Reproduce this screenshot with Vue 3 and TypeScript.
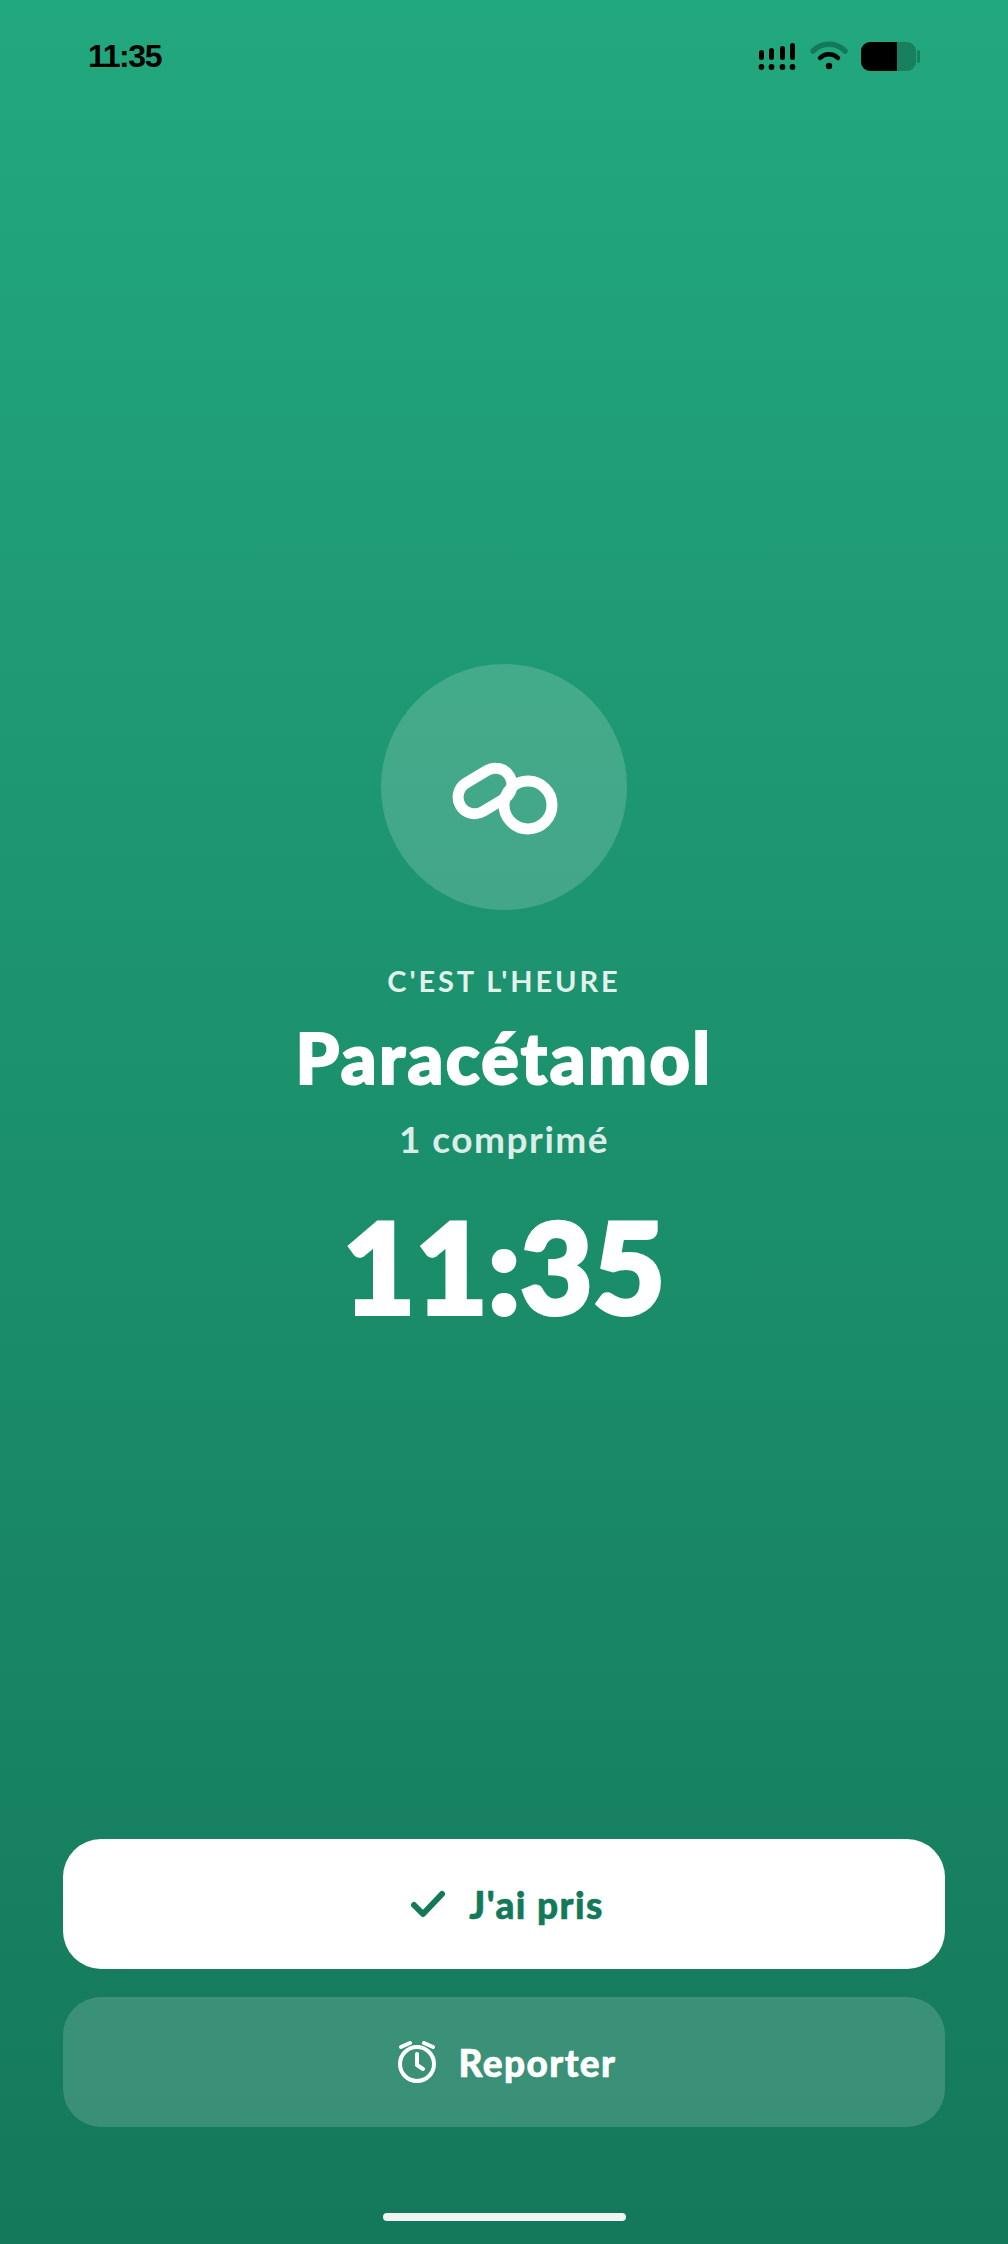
<script setup lang="ts">
const medication = {
  label: "C'est l'heure",
  name: 'Paracétamol',
  dose: '1 comprimé',
  time: '11:35'
}

const signalBars = [
  { x: 759, y: 50, h: 10 },
  { x: 769, y: 48, h: 12 },
  { x: 780, y: 46, h: 14 },
  { x: 790, y: 43, h: 17 }
]
</script>

<template>
  <div class="screen">
    <header class="status-bar">
      <span class="clock">{{ medication.time }}</span>
      <svg class="status-icons" width="164" height="40" viewBox="758 36 164 40">
        <g v-for="bar in signalBars" :key="bar.x">
          <rect :x="bar.x" :y="bar.y" width="5" :height="bar.h" rx="2.5" fill="#000" />
          <circle :cx="bar.x + 2.5" cy="67" r="2.9" fill="#000" />
        </g>
        <path d="M813 51 C822 42 836 42 845 51" fill="none" stroke="#14785a" stroke-width="5.5" stroke-linecap="round" />
        <path d="M820 58 C825 53 833 53 838 58" fill="none" stroke="#000" stroke-width="4.5" stroke-linecap="round" />
        <circle cx="829" cy="66" r="3.2" fill="#000" />
        <rect x="861" y="42" width="55" height="29" rx="9" fill="#18805f" />
        <path d="M870 42 H897 V71 H870 A9 9 0 0 1 861 62 V51 A9 9 0 0 1 870 42 Z" fill="#000" />
        <rect x="917" y="50" width="3" height="13" rx="1.5" fill="#18805f" />
      </svg>
    </header>

    <main class="reminder">
      <div class="pill-circle">
        <svg width="120" height="120" viewBox="0 0 120 120" fill="none" stroke="#fff" stroke-width="11">
          <rect x="12.4" y="47.5" width="57.3" height="33" rx="16.5" transform="rotate(-31 41 64)" />
          <circle cx="84" cy="78" r="24" />
        </svg>
      </div>
      <p class="label">{{ medication.label }}</p>
      <h1 class="name">{{ medication.name }}</h1>
      <p class="dose">{{ medication.dose }}</p>
      <p class="time">{{ medication.time }}</p>
    </main>

    <footer class="actions">
      <button type="button" class="action primary">
        <svg width="38" height="30" viewBox="0 0 38 30" fill="none" stroke="#14785a" stroke-width="6" stroke-linecap="round" stroke-linejoin="round">
          <path d="M5 16 L14 25 L33 5" />
        </svg>
        <span>J'ai pris</span>
      </button>
      <button type="button" class="action secondary">
        <svg width="40" height="42" viewBox="0 0 40 42" fill="none" stroke="#fff" stroke-width="4" stroke-linecap="round" stroke-linejoin="round">
          <circle cx="20" cy="23" r="17" />
          <path d="M20 13 V24 L26 28" />
          <path d="M4 6 L13 2" />
          <path d="M36 6 L27 2" />
        </svg>
        <span>Reporter</span>
      </button>
    </footer>

    <div class="home-indicator"></div>
  </div>
</template>

<style>
html,
body {
  margin: 0;
  background: #14785a;
}
</style>

<style scoped>
.screen {
  display: flex;
  flex-direction: column;
  width: 1008px;
  height: 2244px;
  box-sizing: border-box;
  background: linear-gradient(180deg, #22a87e 0%, #14785a 100%);
  font-family: Lato, "Noto Sans", sans-serif;
  overflow: hidden;
}

.status-bar {
  display: flex;
  align-items: flex-start;
  justify-content: space-between;
  height: 76px;
  padding: 36px 86px 0 88px;
  box-sizing: border-box;
}

.clock {
  font-family: "Liberation Sans", sans-serif;
  font-size: 32px;
  line-height: 40px;
  font-weight: 700;
  letter-spacing: -1.4px;
  color: #000;
}

.status-icons {
  display: block;
}

.reminder {
  flex: 1;
  display: flex;
  flex-direction: column;
  align-items: center;
  padding-top: 588px;
  color: #fff;
}

.pill-circle {
  display: flex;
  align-items: center;
  justify-content: center;
  width: 246px;
  height: 246px;
  border-radius: 50%;
  background: rgba(255, 255, 255, 0.17);
}

.label {
  margin: 51px 0 0;
  font-size: 29px;
  line-height: 40px;
  font-weight: 700;
  letter-spacing: 2.9px;
  text-transform: uppercase;
  color: rgba(255, 255, 255, 0.88);
}

.name {
  margin: 14px 0 0;
  font-size: 70px;
  line-height: 84px;
  font-weight: 900;
  letter-spacing: 2.4px;
  -webkit-text-stroke: 2px #fff;
  color: #fff;
}

.dose {
  margin: 15px 0 0;
  font-size: 37px;
  line-height: 50px;
  font-weight: 700;
  letter-spacing: 1.5px;
  color: rgba(255, 255, 255, 0.85);
}

.time {
  margin: 27px 0 0;
  font-size: 125px;
  line-height: 150px;
  font-weight: 900;
  -webkit-text-stroke: 4px #fff;
  color: #fff;
}

.actions {
  display: flex;
  flex-direction: column;
  gap: 28px;
  padding: 0 63px;
}

.action {
  display: flex;
  align-items: center;
  justify-content: center;
  gap: 22px;
  height: 130px;
  padding: 0 0 0 5px;
  border: none;
  border-radius: 38px;
  font-family: inherit;
  font-size: 37px;
  font-weight: 900;
  letter-spacing: 1.4px;
}

.primary {
  background: #fff;
  color: #14785a;
  -webkit-text-stroke: 0.6px #14785a;
}

.secondary {
  background: rgba(255, 255, 255, 0.16);
  color: #fff;
  -webkit-text-stroke: 0.6px #fff;
}

.home-indicator {
  align-self: center;
  width: 243px;
  height: 8px;
  margin: 86px 0 23px;
  border-radius: 4px;
  background: rgba(255, 255, 255, 0.93);
}
</style>
